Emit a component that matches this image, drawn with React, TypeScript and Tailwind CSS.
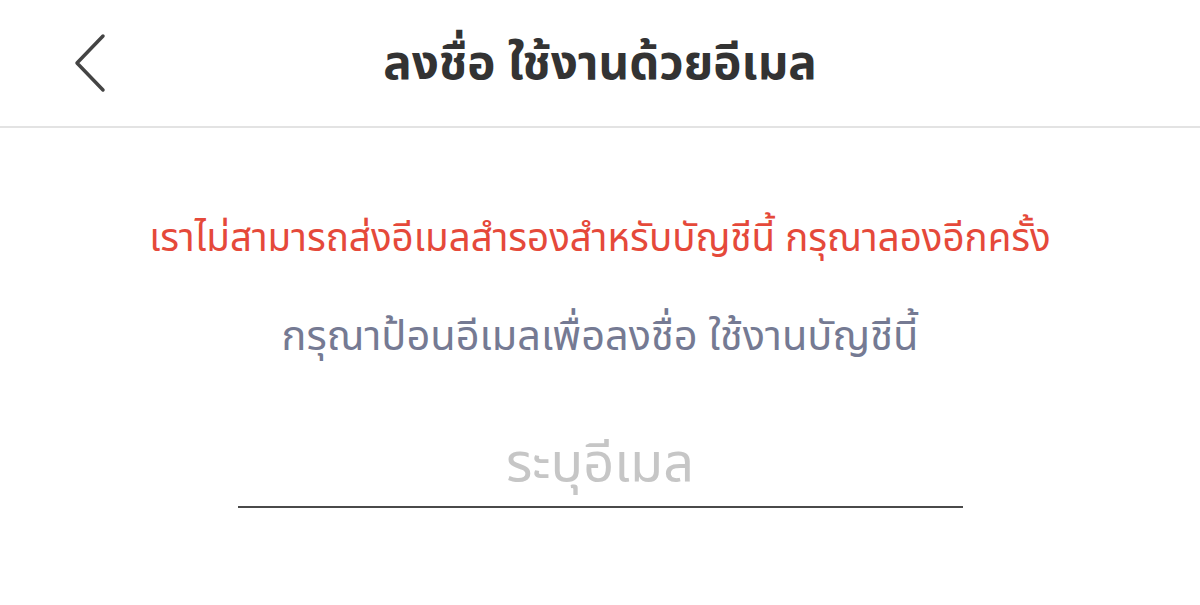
import { useState } from 'react';

export default function App() {
  const [email, setEmail] = useState('');

  return (
    <div className="w-[1200px] h-[605px] bg-white flex flex-col" style={{ fontFamily: '"Noto Sans", "Noto Sans Thai", sans-serif' }}>
      {/* Header */}
      <div className="h-[128px] flex items-center relative border-b-2 border-[#e3e3e3]">
        <button className="absolute left-[70px] top-[32px] w-[40px] h-[62px] flex items-center justify-center">
          <svg width="34" height="60" viewBox="0 0 34 60" fill="none">
            <path d="M30 3 L4 30 L30 57" stroke="#444" strokeWidth="3.5" strokeLinecap="round" strokeLinejoin="round" />
          </svg>
        </button>
        <h1 className="flex-1 text-center text-[47.5px] font-bold text-[#333333] pb-1">ลงชื่อ ใช้งานด้วยอีเมล</h1>
      </div>

      {/* Body */}
      <div className="flex flex-col items-center">
        <p className="mt-[84px] text-[38.5px] leading-[48px] text-[#e5493a]">
          เราไม่สามารถส่งอีเมลสำรองสำหรับบัญชีนี้ กรุณาลองอีกครั้ง
        </p>
        <p className="mt-[48px] text-[41.5px] leading-[52px] text-[#757a93]">
          กรุณาป้อนอีเมลเพื่อลงชื่อ ใช้งานบัญชีนี้
        </p>
        <div className="mt-[74px] w-[725px] border-b-2 border-[#4a4a4a]">
          <input
            value={email}
            onChange={e => setEmail(e.target.value)}
            placeholder="ระบุอีเมล"
            className="w-full h-[72px] pb-[20px] text-center text-[54px] text-[#333] placeholder:text-[#c6c6c6] outline-none bg-transparent"
          />
        </div>
      </div>
    </div>
  );
}
